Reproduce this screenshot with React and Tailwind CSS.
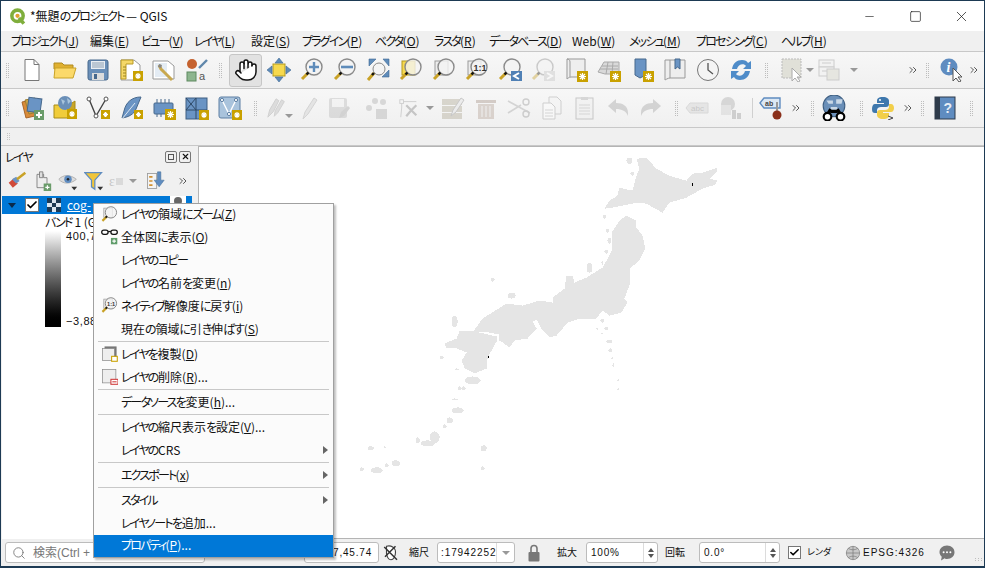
import { Hand, Search, Minus, Square, X, ChevronsRight, Check } from "lucide-react";

// the reference font squeezes kana a lot more than kanji, so tighten those runs only
const Jp = ({ children }) =>
  String(children)
    .split(/([ァ-ヶー]+|[ぁ-ん]+)/)
    .map((part, i) => {
      if (/^[ァ-ヶー]+$/.test(part)) return <span key={i} className="tracking-[-1.8px]">{part}</span>;
      if (/^[ぁ-ん]+$/.test(part)) return <span key={i} className="tracking-[-1.2px]">{part}</span>;
      return part;
    });

// small yellow badge with a white asterisk used on "new ..." icons
const Badge = ({ x = 13, y = 13, s = 11 }) => (
  <g>
    <rect x={x} y={y} width={s} height={s} fill="#c9a100" />
    <path
      d={`M${x + s / 2} ${y + 2}v${s - 4}M${x + 2} ${y + s / 2}h${s - 4}M${x + 3} ${y + 3}l${s - 6} ${s - 6}M${x + s - 3} ${y + 3}l${6 - s} ${s - 6}`}
      stroke="#fff"
      strokeWidth="1.2"
    />
  </g>
);

const Svg = ({ children, size = 24, className = "" }) => (
  <svg width={size} height={size} viewBox="0 0 24 24" fill="none" className={className}>
    {children}
  </svg>
);

// magnifier glass with a yellow handle
const Glass = ({ children, fill = "#f4f4f4" }) => (
  <>
    {children}
    <circle cx="14" cy="9" r="8" fill={fill} fillOpacity="0.8" stroke="#8a8a8a" strokeWidth="1.4" />
    <path d="M8 15L2 21" stroke="#c9a227" strokeWidth="3" />
    <path d="M8.5 14.5L6.5 16.5" stroke="#111" strokeWidth="2.4" />
  </>
);

const icons = {
  newFile: (
    <Svg>
      <path d="M5 1.500h9l5 5v16H5z" fill="#fff" stroke="#777" />
      <path d="M14 1.500v5h5" stroke="#777" />
    </Svg>
  ),
  open: (
    <Svg>
      <path d="M1 5h8l2 2h9v4H1z" fill="#e0b030" stroke="#b08a20" />
      <path d="M2 10h21l-3 10H1z" fill="#fbd96a" stroke="#c9a227" />
    </Svg>
  ),
  save: (
    <Svg>
      <rect x="2" y="2" width="20" height="20" rx="2" fill="#6a8fb8" stroke="#47688c" />
      <rect x="5" y="3" width="14" height="8" fill="#e9eef3" />
      <path d="M6 5h12M6 7h12M6 9h12" stroke="#8b9fb3" />
      <rect x="6" y="15" width="12" height="7" fill="#dcdcdc" />
      <rect x="8" y="16" width="3" height="5" fill="#47688c" />
    </Svg>
  ),
  layout: (
    <Svg>
      <path d="M2 2h13l6 5v15H2z" fill="#fff" stroke="#999" />
      <path d="M2 2h12v4H7v15H2z" fill="#f5d868" stroke="#b99a25" />
      <path d="M4 9h3M4 12h3M4 15h3M4 18h3" stroke="#9c8420" />
      <Badge x={14} y={13} s={10} />
    </Svg>
  ),
  manager: (
    <Svg>
      <path d="M1 3h15l6 5v13H1z" fill="#fff" stroke="#999" />
      <path d="M3 5h12v14H3z" fill="#e4ecf4" />
      <path d="M7 7l2 4 3 3 8 8" stroke="#c8a850" strokeWidth="3" />
      <path d="M7 6l3 1-1 3-3-1z" fill="#888" />
    </Svg>
  ),
  style: (
    <Svg>
      <circle cx="7" cy="6" r="5" fill="#c5622f" />
      <path d="M14 10L22 2" stroke="#5f87ab" strokeWidth="2.4" />
      <rect x="2" y="14" width="9" height="9" fill="#8db58e" stroke="#5f8a60" />
      <text x="14" y="22" fontSize="11" fontFamily="Liberation Sans" fill="#555">a</text>
    </Svg>
  ),
  pan: (
    <Svg>
      <rect x="6" y="6" width="12" height="12" fill="#f6d94e" stroke="#b29a1e" />
      <path d="M12 0l4 5H8zM12 24l-4-5h8zM0 12l5-4v8zM24 12l-5 4V8z" fill="#5f8cba" stroke="#3f6a95" strokeWidth=".6" />
    </Svg>
  ),
  zoomIn: (
    <Svg>
      <Glass />
      <path d="M14 4v10M9 9h10" stroke="#5f8cba" strokeWidth="2.4" />
    </Svg>
  ),
  zoomOut: (
    <Svg>
      <Glass />
      <path d="M8 9h12" stroke="#5f8cba" strokeWidth="2.6" />
    </Svg>
  ),
  zoomFull: (
    <Svg>
      <path d="M3 1h7L3 8zM23 1v7l-6-7zM23 19h-7l7-7z" fill="#5f8cba" stroke="#3f6a95" strokeWidth=".6" />
      <circle cx="13" cy="11" r="6" fill="#f4f4f4" stroke="#8a8a8a" />
      <path d="M8 15L2 22" stroke="#c9a227" strokeWidth="3" />
      <path d="M8 15L6 17" stroke="#111" strokeWidth="2.4" />
    </Svg>
  ),
  zoomSel: (
    <Svg>
      <Glass>
        <rect x="3" y="3" width="13" height="14" fill="#f6d94e" stroke="#b29a1e" />
      </Glass>
    </Svg>
  ),
  zoomLayer: (
    <Svg>
      <Glass>
        <rect x="3" y="3" width="13" height="14" fill="#ececec" stroke="#999" />
      </Glass>
    </Svg>
  ),
  zoomNative: (
    <Svg>
      <Glass>
        <rect x="3" y="3" width="13" height="14" fill="#ececec" stroke="#999" />
      </Glass>
      <text x="8.500" y="12.500" fontSize="9" fontWeight="700" fontFamily="Liberation Sans" fill="#333">1:1</text>
    </Svg>
  ),
  zoomLast: (
    <Svg>
      <Glass />
      <rect x="13" y="13" width="11" height="10" fill="#4f80b5" />
      <path d="M21 15l-5 3 5 3" stroke="#fff" strokeWidth="2" />
    </Svg>
  ),
  zoomNext: (
    <Svg className="opacity-40">
      <Glass />
      <rect x="13" y="13" width="11" height="10" fill="#c4c4c4" />
      <path d="M16 15l5 3-5 3" stroke="#fff" strokeWidth="2" />
    </Svg>
  ),
  mapView: (
    <Svg>
      <path d="M3 1h18v18H7c-2 0-4 2-4 2z" fill="#eee" stroke="#999" />
      <path d="M3 1c0 0 3 0 3 3v15" stroke="#999" />
      <Badge x={13} y={13} s={11} />
    </Svg>
  ),
  map3d: (
    <Svg>
      <path d="M1 14L7 4h15v12H8z" fill="#d9d9d9" stroke="#aaa" />
      <path d="M5 8h16M3 11h18M11 4l-2 12M16 4l-1 12" stroke="#aaa" />
      <Badge x={13} y={13} s={11} />
    </Svg>
  ),
  bookmark: (
    <Svg>
      <path d="M5 1h11v16l-6 3-5-3z" fill="#6a94c4" stroke="#47688c" />
      <Badge x={13} y={13} s={11} />
    </Svg>
  ),
  bookmarks: (
    <Svg>
      <path d="M2 2h20v18H7c-2 0-5 2-5 2z" fill="#eee" stroke="#999" />
      <path d="M7 2v18" stroke="#999" />
      <path d="M12 1h5v10l-2.500-2-2.500 2z" fill="#6a94c4" stroke="#47688c" />
    </Svg>
  ),
  clock: (
    <Svg>
      <circle cx="12" cy="12" r="10.500" fill="#f4f4f4" stroke="#777" />
      <path d="M12 5v7l5 4" stroke="#555" strokeWidth="1.3" />
    </Svg>
  ),
  refresh: (
    <Svg>
      <path d="M3 11C4 5 8 2 13 2c3 0 5 1 6 3l3-2v8h-8l3-3c-2-3-8-2-9 3z" fill="#4f8cc9" />
      <path d="M21 13c-1 6-5 9-10 9-3 0-5-1-6-3l-3 2v-8h8l-3 3c2 3 8 2 9-3z" fill="#4f8cc9" />
    </Svg>
  ),
  select: (
    <Svg>
      <rect x="1" y="1" width="19" height="19" fill="#e0e0d8" stroke="#bbb" strokeDasharray="2 1" />
      <path d="M11 10v13l3-3 3 4 2-1-3-4h4z" fill="#fff" stroke="#aaa" />
    </Svg>
  ),
  boxes: (
    <Svg>
      <rect x="1" y="2" width="15" height="7" fill="#f2f2f2" stroke="#c4c4c4" />
      <rect x="1" y="9" width="15" height="9" fill="#f2f2f2" stroke="#c4c4c4" />
      <path d="M4 5h9M4 13h9" stroke="#c4c4c4" />
      <rect x="9" y="11" width="12" height="11" fill="#e4e4dc" stroke="#c4c4c4" />
    </Svg>
  ),
  identify: (
    <Svg>
      <circle cx="9" cy="9" r="8.500" fill="#5f8cc0" />
      <text x="6.500" y="14" fontSize="14" fontStyle="italic" fontWeight="700" fontFamily="Liberation Serif" fill="#fff">i</text>
      <path d="M13 10v13l3-3 3 4 2-1-3-4h4z" fill="#fff" stroke="#555" />
    </Svg>
  ),
  layers: (
    <Svg>
      <path d="M2 6l10-2 3 16-9 2z" fill="#d98b3a" stroke="#a8662a" />
      <path d="M5 4l10-2 3 14-9 2z" fill="#c9a24a" stroke="#a08030" />
      <rect x="8" y="2" width="13" height="14" fill="#6a94c4" stroke="#47688c" transform="rotate(8 14 9)" />
      <rect x="14" y="14" width="10" height="10" fill="#6a9c6a" />
      <path d="M19 16v6M16 19h6" stroke="#fff" strokeWidth="2" />
    </Svg>
  ),
  gpkg: (
    <Svg>
      <path d="M1 9h15v13H1z" fill="#f0cc3a" stroke="#a88c18" />
      <path d="M16 9l6-4v13l-6 4z" fill="#c9a627" stroke="#a88c18" />
      <circle cx="12" cy="7" r="7" fill="#6a8fb8" />
      <path d="M8 3l4 2-2 4zM14 2l4 3-3 3z" fill="#a8c4dc" />
      <Badge x={14} y={13} s={10} />
    </Svg>
  ),
  vertex: (
    <Svg>
      <path d="M3 3l7 17L20 3" stroke="#444" strokeWidth="1.4" />
      <circle cx="3" cy="3" r="2" fill="#fff" stroke="#555" />
      <circle cx="10" cy="20" r="2" fill="#fff" stroke="#555" />
      <circle cx="20" cy="3" r="2" fill="#fff" stroke="#555" />
      <Badge x={15} y={14} s={9} />
    </Svg>
  ),
  feather: (
    <Svg>
      <path d="M22 1c-9 0-15 5-17 14l-2 7c7-1 12-4 14-9z" fill="#6a94c4" stroke="#47688c" />
      <path d="M3 23L16 7" stroke="#dce6f0" />
      <Badge x={15} y={14} s={9} />
    </Svg>
  ),
  chip: (
    <Svg>
      <rect x="2" y="7" width="19" height="11" rx="1" fill="#6a94c4" stroke="#47688c" />
      <path d="M5 3v4M9 3v4M13 3v4M17 3v4M5 18v3M9 18v3" stroke="#47688c" />
      <Badge x={13} y={13} s={11} />
    </Svg>
  ),
  grid: (
    <Svg>
      <rect x="1" y="2" width="21" height="21" fill="#6a94c4" stroke="#3e5f82" />
      <path d="M1 14h21M11 14v9M11 2v12M1 2l10 12M11 2L1 14" stroke="#2f4a68" />
      <Badge x={14} y={14} s={10} />
    </Svg>
  ),
  mesh: (
    <Svg>
      <rect x="1" y="1" width="21" height="21" rx="2" fill="#a9c3dc" stroke="#5d7fa3" />
      <path d="M4 4l7 14L18 4" stroke="#fff" strokeWidth="1.4" />
      <circle cx="4" cy="4" r="1.6" fill="#fff" stroke="#5d7fa3" />
      <circle cx="11" cy="18" r="1.6" fill="#fff" stroke="#5d7fa3" />
      <circle cx="18" cy="4" r="1.6" fill="#fff" stroke="#5d7fa3" />
      <Badge x={14} y={14} s={10} />
    </Svg>
  ),
  pencils: (
    <Svg>
      <path d="M2 22l2-8L11 2l3 2-6 12zM9 21l1-6 7-12 3 2-7 12z" fill="#dcdcdc" stroke="#cfcfcf" />
    </Svg>
  ),
  pencil: (
    <Svg>
      <path d="M5 23l2-7 9-14 3 2-9 14z" fill="#e4e4e4" stroke="#d4d4d4" />
    </Svg>
  ),
  saveEdit: (
    <Svg className="opacity-35">
      <rect x="2" y="2" width="18" height="20" rx="2" fill="#b0b0b0" />
      <rect x="5" y="3" width="12" height="8" fill="#f0f0f0" />
      <path d="M12 22l2-6 7-6 2 2-6 8z" fill="#999" />
    </Svg>
  ),
  dots: (
    <Svg className="opacity-50">
      <circle cx="4" cy="12" r="3" fill="#bbb" />
      <circle cx="10" cy="5" r="3" fill="#bbb" />
      <circle cx="18" cy="6" r="3" fill="#bbb" />
      <rect x="11" y="13" width="11" height="10" fill="#bbb" />
    </Svg>
  ),
  vertexTool: (
    <Svg className="opacity-50">
      <rect x="2" y="3" width="4" height="4" stroke="#aaa" />
      <path d="M6 5h14M4 7v5l-1 10" stroke="#aaa" />
      <path d="M9 9l11 11M20 9l-6 6-5 6" stroke="#999" strokeWidth="2.4" />
    </Svg>
  ),
  table: (
    <Svg className="opacity-35">
      <rect x="1" y="3" width="20" height="6" fill="#a49c84" />
      <rect x="1" y="10" width="20" height="6" fill="#a49c84" />
      <rect x="1" y="17" width="20" height="6" fill="#a49c84" />
      <path d="M10 20l2-6L20 2l3 2-8 12z" fill="#ddd" stroke="#777" />
    </Svg>
  ),
  trash: (
    <Svg className="opacity-30">
      <path d="M2 4h20v3H2z" fill="#8a7060" />
      <path d="M4 8h16v15H4z" fill="#a08878" />
      <path d="M8 10v11M12 10v11M16 10v11" stroke="#eee" />
    </Svg>
  ),
  scissors: (
    <Svg className="opacity-35">
      <path d="M1 5l22 12M1 17l13-8" stroke="#999" strokeWidth="1.6" />
      <circle cx="19" cy="6" r="3" stroke="#888" strokeWidth="1.4" />
      <circle cx="19" cy="18" r="3" stroke="#888" strokeWidth="1.4" />
    </Svg>
  ),
  copy: (
    <Svg className="opacity-40">
      <path d="M9 1h8l4 4v13H9z" fill="#f4f4f4" stroke="#999" />
      <path d="M3 7h8l4 4v12H3z" fill="#fff" stroke="#999" />
      <path d="M5 14h8M5 17h8M5 20h8" stroke="#aaa" />
    </Svg>
  ),
  paste: (
    <Svg className="opacity-40">
      <rect x="3" y="2" width="17" height="21" fill="#eee" stroke="#888" />
      <rect x="8" y="1" width="7" height="3" fill="#aaa" />
      <path d="M6 9h11M6 12h11M6 15h11M6 18h11" stroke="#aaa" />
    </Svg>
  ),
  undo: (
    <Svg className="opacity-30">
      <path d="M2 10l8-7v4c7 0 12 3 12 10v3c-2-5-6-7-12-7v4z" fill="#888" />
    </Svg>
  ),
  redo: (
    <Svg className="opacity-30">
      <path d="M22 10l-8-7v4C7 7 2 10 2 17v3c2-5 6-7 12-7v4z" fill="#888" />
    </Svg>
  ),
  abc: (
    <Svg className="opacity-35">
      <path d="M1 12l4-5h18v10H5z" fill="#ccc" stroke="#aaa" />
      <text x="6" y="15" fontSize="8" fontFamily="Liberation Sans" fill="#777">abc</text>
    </Svg>
  ),
  labelTool: (
    <Svg className="opacity-40">
      <circle cx="10" cy="8" r="7" fill="#aaa" />
      <rect x="3" y="9" width="10" height="10" fill="#ccc" />
      <rect x="14" y="14" width="4" height="9" fill="#999" />
      <rect x="19" y="17" width="4" height="6" fill="#999" />
    </Svg>
  ),
  labelPin: (
    <Svg>
      <path d="M1 7l4-5h16v10H5z" fill="#dce8f4" stroke="#5f8cc0" strokeWidth="1.4" />
      <text x="6" y="10" fontSize="7" fontWeight="700" fontFamily="Liberation Sans" fill="#444">ab</text>
      <path d="M18 6v12" stroke="#999" strokeWidth="2" />
      <circle cx="18" cy="19" r="4.500" fill="#8a2f1a" />
    </Svg>
  ),
  binoculars: (
    <Svg size={26}>
      <circle cx="12" cy="10" r="10" fill="#6a8fb8" stroke="#3e5f82" />
      <path d="M5 5h6v3H7zM14 4h6l-1 4h-5zM9 11h6v3H9z" fill="#c9d8e6" />
      <path d="M9 13l-3 5M15 13l3 5M9 15h6" stroke="#000" strokeWidth="3" />
      <circle cx="6" cy="20" r="3.500" fill="#fff" stroke="#000" strokeWidth="2" />
      <circle cx="18" cy="20" r="3.500" fill="#fff" stroke="#000" strokeWidth="2" />
    </Svg>
  ),
  python: (
    <Svg>
      <path d="M12 1c-5 0-6 2-6 4v2h7v1H4c-2 0-3 2-3 5s1 4 3 4h2v-3c0-2 2-3 4-3h5c2 0 3-1 3-3V5c0-2-2-4-6-4z" fill="#3f78ad" />
      <path d="M12 23c5 0 6-2 6-4v-2h-6v-1h8c2 0 3-2 3-4s-1-4-3-4h-2v3c0 2-2 3-4 3H9c-2 0-3 1-3 3v2c0 2 2 4 6 4z" fill="#f2cf4a" />
      <circle cx="9" cy="4" r="1" fill="#fff" />
      <path d="M17 20l5 2-5 2" stroke="#444" />
    </Svg>
  ),
  help: (
    <Svg>
      <rect x="2" y="1" width="20" height="22" fill="#5f8cc0" stroke="#2e3b4a" />
      <rect x="2" y="1" width="5" height="22" fill="#2e3b4a" />
      <text x="10.500" y="17" fontSize="14" fontWeight="700" fontFamily="Liberation Sans" fill="#e8eef5">?</text>
    </Svg>
  ),
};

const Grip = ({ className = "" }) => (
  <div className={`grid grid-cols-2 gap-x-[1px] gap-y-[1px] w-[3px] shrink-0 ${className}`}>
    {[...Array(16)].map((_, i) => (
      <span key={i} className="block w-[1px] h-[1px] bg-[#bdbdbd]" />
    ))}
  </div>
);

const Dropdown = ({ className = "" }) => (
  <span className={`w-0 h-0 shrink-0 border-l-[4px] border-r-[4px] border-t-[4px] border-l-transparent border-r-transparent border-t-[#999] ${className}`} />
);

const More = ({ className = "" }) => (
  <div className={`flex items-center justify-center shrink-0 text-[#444] ${className}`}>
    <ChevronsRight size={12} strokeWidth={1.8} />
  </div>
);

const Btn = ({ icon, className = "w-[33px]" }) => (
  <div className={`flex items-center justify-center shrink-0 ${className}`}>{icons[icon]}</div>
);

const menuBar = [
  ["プロジェクト", "J", "w-[79px]"],
  ["編集", "E", "w-[51px]"],
  ["ビュー", "V", "w-[53px]"],
  ["レイヤ", "L", "w-[57px]"],
  ["設定", "S", "w-[51px]"],
  ["プラグイン", "P", "w-[73px]"],
  ["ベクタ", "O", "w-[59px]"],
  ["ラスタ", "R", "w-[55px]"],
  ["データベース", "D", "w-[83px]"],
  ["Web", "W", "w-[57px]"],
  ["メッシュ", "M", "w-[67px]"],
  ["プロセシング", "C", "w-[85px]"],
  ["ヘルプ", "H", "w-[60px]"],
];

const Mn = ({ label, k, tail = "" }) => (
  <span className="whitespace-nowrap">
    <Jp>{label}</Jp>(<u>{k}</u>){tail}
  </span>
);

const MenuIcon = ({ name }) => {
  if (name === "zoom")
    return (
      <Svg size={17}>
        <Glass>
          <rect x="4" y="3" width="12" height="13" fill="#eee" stroke="#999" />
        </Glass>
      </Svg>
    );
  if (name === "overview")
    return (
      <Svg size={17}>
        <rect x="1" y="3" width="9" height="6" rx="3" stroke="#111" strokeWidth="1.800" />
        <rect x="14" y="3" width="9" height="6" rx="3" stroke="#111" strokeWidth="1.800" />
        <path d="M10 5h4" stroke="#111" strokeWidth="1.800" />
        <rect x="14" y="14" width="9" height="9" fill="#5f9c6a" />
        <path d="M18.500 16v5M16 18.500h5" stroke="#fff" strokeWidth="1.500" />
      </Svg>
    );
  if (name === "native")
    return (
      <Svg size={17}>
        <Glass>
          <rect x="4" y="3" width="12" height="13" fill="#eee" stroke="#999" />
        </Glass>
        <text x="8.500" y="12" fontSize="8" fontWeight="700" fontFamily="Liberation Sans" fill="#333">1:1</text>
      </Svg>
    );
  if (name === "dup")
    return (
      <Svg size={17}>
        <rect x="5" y="2" width="17" height="17" fill="#777" />
        <rect x="2" y="5" width="17" height="17" fill="#eee" stroke="#888" />
        <rect x="15" y="16" width="8" height="7" fill="#fff" stroke="#c9a100" strokeWidth="1.500" />
      </Svg>
    );
  if (name === "remove")
    return (
      <Svg size={17}>
        <rect x="2" y="2" width="19" height="19" fill="#eee" stroke="#888" />
        <rect x="14" y="16" width="10" height="7" fill="#fff" stroke="#d03a3a" strokeWidth="1.500" />
        <path d="M16 19.500h6" stroke="#d03a3a" strokeWidth="1.500" />
      </Svg>
    );
  return null;
};

const ctxMenu = [
  { t: <Mn label="レイヤの領域にズーム" k="Z" />, icon: "zoom", h: "h-[22px]" },
  { t: <Mn label="全体図に表示" k="O" />, icon: "overview" },
  { t: <Jp>レイヤのコピー</Jp> },
  { t: <Mn label="レイヤの名前を変更" k="n" /> },
  { t: <Mn label="ネイティブ解像度に戻す" k="i" />, icon: "native" },
  { t: <Mn label="現在の領域に引き伸ばす" k="S" /> },
  { sep: true },
  { t: <Mn label="レイヤを複製" k="D" />, icon: "dup" },
  { t: <Mn label="レイヤの削除" k="R" tail="..." />, icon: "remove" },
  { sep: true },
  { t: <Mn label="データソースを変更" k="h" tail="..." /> },
  { sep: true },
  { t: <Mn label="レイヤの縮尺表示を設定" k="V" tail="..." /> },
  { t: <Jp>レイヤのCRS</Jp>, arrow: true },
  { sep: true },
  { t: <Mn label="エクスポート" k="x" />, arrow: true },
  { sep: true },
  { t: <Jp>スタイル</Jp>, arrow: true },
  { t: <Jp>レイヤノートを追加...</Jp> },
  { t: <Mn label="プロパティ" k="P" tail="..." />, active: true, h: "h-[22px]" },
];

const ContextMenu = () => (
  <div className="absolute left-[92px] top-[202px] w-[241px] bg-[#fbfbfb] border border-[#a0a0a0] shadow-[2px_2px_2px_rgba(0,0,0,0.25)] text-[12px] text-[#111]">
    {ctxMenu.map((item, i) =>
      item.sep ? (
        <div key={i} className="h-[2px] mx-[4px] border-t border-[#c8c8c8]" />
      ) : (
        <div
          key={i}
          className={`relative flex items-center pl-[27px] pb-[2px] ${item.h || "h-[23px]"} ${
            item.active ? "bg-[#0078d7] text-white" : ""
          }`}
        >
          {item.icon && (
            <span className="absolute left-[7px] top-[2px]">
              <MenuIcon name={item.icon} />
            </span>
          )}
          {item.t}
          {item.arrow && (
            <span className="absolute right-[5px] top-[7px] w-0 h-0 border-t-[4px] border-b-[4px] border-l-[5px] border-t-transparent border-b-transparent border-l-[#666]" />
          )}
        </div>
      )
    )}
  </div>
);

const islands = [
  [630, 160, 3, 3], [633, 173, 2, 2], [590, 267, 3, 5], [512, 295, 4, 3], [493, 279, 2, 2],
  [455, 321, 3, 6], [605, 216, 2, 2], [608, 230, 2, 2], [610, 240, 2, 3], [607, 251, 2, 2],
  [603, 262, 1, 2], [598, 328, 1, 1], [603, 320, 2, 2], [607, 328, 2, 2], [603, 333, 1, 1],
  [610, 341, 3, 2], [442, 357, 2, 2], [457, 369, 2, 1], [473, 380, 8, 4], [460, 388, 2, 2],
  [464, 388, 2, 2], [455, 399, 3, 1], [458, 410, 6, 3], [450, 420, 3, 3], [445, 426, 2, 2],
  [435, 437, 5, 6], [428, 443, 7, 3], [418, 440, 2, 3], [371, 448, 3, 2], [385, 447, 1, 1],
  [396, 463, 4, 3], [387, 465, 2, 2], [377, 470, 6, 3], [362, 469, 2, 2], [484, 448, 3, 3],
  [483, 468, 2, 2], [611, 350, 2, 2], [613, 358, 1, 1], [614, 365, 1, 2], [619, 380, 1, 1], [619, 389, 1, 1],
];

const JapanMap = () => (
  <svg viewBox="199 147 786 390" className="w-full h-full" shapeRendering="crispEdges">
    <g fill="#e5e5e5">
      {/* Hokkaido */}
      <polygon points="637,158 647,157 657,168 670,175 687,180 693,173 703,172 718,167 718,170 710,178 718,180 716,184 703,188 687,197 670,202 663,212 647,203 637,202 623,205 613,207 605,208 610,200 618,195 620,187 633,190 637,175 640,168" />
      {/* Honshu and Shikoku, they read as one blob at this scale */}
      <polygon points="620,220 627,215 637,220 637,227 643,235 646,248 640,260 630,268 631,282 625,298 628,302 622,312 610,315 603,310 597,318 580,318 568,322 563,328 557,335 550,337 541,327 537,319 533,321 537,328 528,338 515,340 510,347 503,342 499,340 499,334 484,331 470,331 473,332 483,318 507,303 523,305 540,300 553,302 553,297 565,288 567,275 573,275 575,282 587,277 603,267 607,260 613,248 612,232" />
      {/* Kyushu */}
      <polygon points="460,330 475,331 484,333 497,336 497,341 488,357 487,368 475,373 465,368 462,360 467,352 457,348 447,348 445,343 457,338" />
      {islands.map(([x, y, rx, ry], i) => (
        <ellipse key={i} cx={x} cy={y} rx={rx} ry={ry} />
      ))}
    </g>
    <rect x="693" y="182" width="1" height="3" fill="#000" />
    <rect x="488" y="356" width="1" height="2" fill="#000" />
  </svg>
);

const Spin = ({ text, className = "" }) => (
  <div className={`flex h-[21px] bg-white border border-[#bcbcbc] rounded-[3px] shrink-0 ${className}`}>
    <span className="flex-1 pl-[4px] leading-[19px] tracking-[0.8px]">{text}</span>
    <span className="w-[14px] flex flex-col items-center justify-center gap-[2px] border-l border-[#dcdcdc]">
      <span className="w-0 h-0 border-l-[3px] border-r-[3px] border-b-[4px] border-l-transparent border-r-transparent border-b-[#555]" />
      <span className="w-0 h-0 border-l-[3px] border-r-[3px] border-t-[4px] border-l-transparent border-r-transparent border-t-[#555]" />
    </span>
  </div>
);

export default function App() {
  return (
    <div className="relative w-[985px] h-[568px] overflow-hidden flex flex-col bg-[#f0f0f0] border-x border-t-[1px] border-b-[2px] border-[#1d3a54] [font-family:'Noto_Sans_CJK_JP','Liberation_Sans',sans-serif] [font-feature-settings:'palt'] text-[12px] text-[#111]">
      {/* title bar */}
      <div className="flex items-center h-[30px] bg-white shrink-0">
        <svg width="17" height="17" viewBox="0 0 24 24" className="ml-[8px]" fill="none">
          <circle cx="12" cy="11" r="8" stroke="#7fae3c" strokeWidth="5" />
          <circle cx="12" cy="11" r="3" fill="#e0a030" />
          <path d="M14 14l7 8" stroke="#7fae3c" strokeWidth="5" />
        </svg>
        <span className="ml-[4px] whitespace-nowrap">
          <Jp>*無題のプロジェクト — QGIS</Jp>
        </span>
        <div className="ml-auto flex items-center">
          <div className="w-[46px] flex justify-center"><Minus size={13} strokeWidth={1.1} /></div>
          <div className="w-[46px] flex justify-center"><Square size={13} strokeWidth={1.2} /></div>
          <div className="w-[46px] flex justify-center"><X size={17} strokeWidth={1} /></div>
        </div>
      </div>

      {/* menu bar */}
      <div className="flex items-center h-[20px] pl-[10px] bg-[#f0f0f0] shrink-0">
        {menuBar.map(([label, k, w]) => (
          <div key={label} className={`shrink-0 ${w}`}>
            <Mn label={label} k={k} />
          </div>
        ))}
      </div>

      {/* toolbar 1 */}
      <div className="flex items-center h-[38px] pl-[5px] shrink-0 bg-gradient-to-b from-[#f7f7f7] to-[#f0f0f0] border-t border-b border-[#c8c8c8]">
        <Grip className="mr-[6px]" />
        <Btn icon="newFile" />
        <Btn icon="open" />
        <Btn icon="save" />
        <Btn icon="layout" />
        <Btn icon="manager" />
        <Btn icon="style" />
        <Grip className="ml-[6px] mr-[7px]" />
        <div className="w-[33px] h-[33px] shrink-0 flex items-center justify-center bg-[#e2e2e2] border border-[#c6c6c6] rounded-[3px]">
          <Hand size={24} fill="#fff" stroke="#111" strokeWidth={1.5} />
        </div>
        <Btn icon="pan" />
        <Btn icon="zoomIn" />
        <Btn icon="zoomOut" />
        <Btn icon="zoomFull" />
        <Btn icon="zoomSel" />
        <Btn icon="zoomLayer" />
        <Btn icon="zoomNative" />
        <Btn icon="zoomLast" />
        <Btn icon="zoomNext" />
        <Btn icon="mapView" />
        <Btn icon="map3d" />
        <Btn icon="bookmark" />
        <Btn icon="bookmarks" />
        <Btn icon="clock" />
        <Btn icon="refresh" />
        <Grip className="ml-[8px] mr-[13px]" />
        <Btn icon="select" className="w-[24px]" />
        <Dropdown className="ml-[1px] mr-[4px]" />
        <Btn icon="boxes" className="w-[24px] opacity-80" />
        <Dropdown className="ml-[8px] mr-[47px]" />
        <More className="w-[16px]" />
        <Grip className="ml-[5px] mr-[11px]" />
        <Btn icon="identify" className="w-[24px]" />
        <More className="w-[20px]" />
      </div>

      {/* toolbar 2 */}
      <div className="flex items-center h-[39px] pl-[5px] shrink-0 bg-gradient-to-b from-[#f7f7f7] to-[#f0f0f0] border-b border-[#c8c8c8]">
        <Grip className="mr-[6px]" />
        <Btn icon="layers" />
        <Btn icon="gpkg" />
        <Btn icon="vertex" />
        <Btn icon="feather" />
        <Btn icon="chip" />
        <Btn icon="grid" />
        <Btn icon="mesh" />
        <Grip className="ml-[8px] mr-[9px]" />
        <Btn icon="pencils" className="w-[22px]" />
        <Dropdown className="-ml-[3px] mr-[5px] mt-[16px]" />
        <Btn icon="pencil" className="w-[24px]" />
        <Btn icon="saveEdit" className="w-[34px]" />
        <Btn icon="dots" className="w-[42px]" />
        <Btn icon="vertexTool" className="w-[22px]" />
        <Dropdown className="ml-[6px] mr-[2px]" />
        <Btn icon="table" />
        <Btn icon="trash" />
        <Btn icon="scissors" />
        <Btn icon="copy" />
        <Btn icon="paste" />
        <Btn icon="undo" />
        <Btn icon="redo" />
        <Grip className="ml-[8px] mr-[3px]" />
        <Btn icon="abc" className="w-[32px]" />
        <Btn icon="labelTool" className="w-[33px]" />
        <div className="w-[1px] h-[20px] ml-[6px] mr-[3px] bg-[#d0d0d0] shrink-0" />
        <Btn icon="labelPin" className="w-[30px]" />
        <More className="w-[20px]" />
        <Grip className="ml-[5px] mr-[4px]" />
        <Btn icon="binoculars" className="w-[32px]" />
        <Grip className="ml-[10px] mr-[5px]" />
        <Btn icon="python" className="w-[30px]" />
        <More className="w-[20px]" />
        <Grip className="ml-[3px] mr-[6px]" />
        <Btn icon="help" className="w-[30px]" />
        <Grip className="ml-[10px]" />
      </div>

      {/* empty toolbar */}
      <div className="flex items-center h-[18px] pl-[6px] shrink-0 border-b border-[#c8c8c8]">
        <div className="grid grid-cols-2 gap-[1px] w-[3px]">
          {[...Array(8)].map((_, i) => (
            <span key={i} className="w-[1px] h-[1px] bg-[#c4c4c4]" />
          ))}
        </div>
      </div>

      {/* main */}
      <div className="flex flex-1 min-h-0">
        <div className="w-[197px] shrink-0 flex flex-col pl-[1px] pr-[6px]">
          <div className="flex items-center h-[19px] pl-[3px] pr-[1px] mt-[1px]">
            <span><Jp>レイヤ</Jp></span>
            <div className="ml-auto flex gap-[2px]">
              <span className="w-[12px] h-[12px] border border-[#777] rounded-[2px] flex items-center justify-center">
                <span className="w-[6px] h-[6px] border border-[#555]" />
              </span>
              <span className="w-[12px] h-[12px] border border-[#777] rounded-[2px] flex items-center justify-center">
                <X size={9} strokeWidth={3} />
              </span>
            </div>
          </div>
          <div className="flex items-center h-[30px] pl-[3px]">
            <div className="w-[24px] flex justify-center shrink-0">
              <Svg size={20}>
                <path d="M2 14l6-5 5 6-6 5z" fill="#d04a3a" />
                <path d="M6 10l5-3 4 5-4 3z" fill="#6a94c4" />
                <path d="M12 10L22 2" stroke="#c9a227" strokeWidth="3" />
              </Svg>
            </div>
            <div className="w-[26px] flex justify-center shrink-0">
              <Svg size={20}>
                <path d="M6 4h8v4h4v12H6z" fill="#eee" stroke="#777" />
                <path d="M9 1h4v7H9z" fill="#ddd" stroke="#777" />
                <rect x="14" y="15" width="9" height="9" fill="#6a9c6a" />
                <path d="M18.500 17v5M16 19.500h5" stroke="#fff" strokeWidth="1.500" />
              </Svg>
            </div>
            <div className="w-[26px] flex justify-center shrink-0">
              <Svg size={20}>
                <path d="M1 10c5-6 14-6 21 0-7 6-16 6-21 0z" fill="#dcdcdc" stroke="#aaa" />
                <circle cx="12" cy="10" r="4.500" fill="#5f8cc0" />
                <circle cx="12" cy="10" r="1.500" fill="#222" />
                <path d="M16 19h7l-3.500 4z" fill="#333" />
              </Svg>
            </div>
            <div className="w-[25px] flex justify-center shrink-0">
              <Svg size={20}>
                <path d="M1 2h20l-8 9v11l-4-3v-8z" fill="#f0c53a" stroke="#5f8cc0" strokeWidth="1.500" />
                <path d="M16 19h7l-3.500 4z" fill="#333" />
              </Svg>
            </div>
            <div className="w-[20px] flex items-center justify-center gap-[1px] opacity-40 shrink-0">
              <span className="text-[14px] text-[#888] [font-family:'Liberation_Serif',serif]">ε</span>
              <span className="w-[7px] h-[7px] bg-[#bbb]" />
            </div>
            <Dropdown className="ml-[3px] mr-[8px]" />
            <div className="w-[20px] flex justify-center shrink-0">
              <Svg size={20}>
                <rect x="3" y="3" width="11" height="18" fill="#f4f4f4" stroke="#999" />
                <path d="M5 7h4M5 12h4M5 17h4" stroke="#d09030" strokeWidth="2" />
                <path d="M15 1h4v10h4l-6 8-6-8h4z" fill="#5f8cc0" stroke="#3f6a95" strokeWidth=".6" />
              </Svg>
            </div>
            <More className="w-[16px] ml-[10px]" />
          </div>

          {/* layer tree */}
          <div className="flex-1 bg-white min-h-0 overflow-hidden">
            <div className="flex items-center h-[18px] bg-[#0078d7] text-white">
              <span className="ml-[6px] w-0 h-0 border-l-[4px] border-r-[4px] border-t-[5px] border-l-transparent border-r-transparent border-t-[#0a2a4a]" />
              <span className="ml-[9px] w-[14px] h-[14px] bg-white border border-[#777] flex items-center justify-center">
                <Check size={12} strokeWidth={3.5} color="#000" />
              </span>
              <span className="ml-[8px] w-[14px] h-[14px] grid grid-cols-3 grid-rows-3">
                {[0, 1, 0, 1, 0, 1, 0, 1, 0].map((c, i) => (
                  <span key={i} className={c ? "bg-[#dce6f0]" : "bg-[#1d3a54]"} />
                ))}
              </span>
              <span className="ml-[6px] underline">cog-</span>
              <span className="ml-auto mr-[6px] mb-[2px] w-[16px] h-[16px] bg-white flex justify-center pt-[1px]">
                <span className="w-[8px] h-[8px] rounded-full bg-[#666]" />
              </span>
            </div>
            <div className="pl-[43px] h-[14px] leading-[14px] mt-[1px] whitespace-nowrap"><Jp>バンド</Jp> 1 (G</div>
            <div className="flex pl-[43px] mt-[2px]">
              <div className="w-[16px] h-[96px] bg-gradient-to-b from-white to-black" />
              <div className="ml-[5px] flex flex-col justify-between h-[96px] text-[11px] tracking-[0.6px] [font-family:'Liberation_Sans',sans-serif] leading-[11px]">
                <span>400,7</span>
                <span>−3,88</span>
              </div>
            </div>
          </div>
        </div>

        {/* map canvas */}
        <div className="flex-1 min-w-0 bg-white border-l border-t border-b border-[#b4b4b4]">
          <JapanMap />
        </div>
      </div>

      {/* status bar */}
      <div className="flex items-center h-[27px] shrink-0 pl-[4px] text-[10px] [font-family:'Liberation_Sans','Noto_Sans_CJK_JP',sans-serif]">
        <div className="flex items-center w-[200px] h-[21px] bg-white border border-[#bcbcbc] rounded-[3px] pl-[6px] shrink-0 text-[12px] text-[#777]">
          <Search size={14} strokeWidth={1.5} />
          <span className="ml-[7px] whitespace-nowrap">検索(Ctrl +</span>
        </div>
        <div className="flex items-center justify-end w-[75px] h-[21px] ml-[99px] bg-white border border-[#bcbcbc] rounded-[3px] pr-[6px] shrink-0 tracking-[0.8px]">
          07,45.74
        </div>
        <div className="w-[24px] flex justify-center shrink-0">
          <Svg size={18}>
            <path d="M6 3c6-2 12 2 12 8s-3 10-6 10-5-3-6-8z" fill="#fff" stroke="#444" strokeWidth="1.500" />
            <path d="M3 4l17 17M4 17L18 3" stroke="#333" strokeWidth="2" />
          </Svg>
        </div>
        <span className="shrink-0 w-[34px] pl-[6px]">縮尺</span>
        <div className="flex h-[21px] w-[78px] bg-white border border-[#bcbcbc] rounded-[3px] shrink-0">
          <span className="flex-1 pl-[3px] leading-[19px] tracking-[0.9px]">:17942252</span>
          <span className="w-[19px] border-l border-[#dcdcdc] flex items-center justify-center">
            <Dropdown className="border-t-[#555]" />
          </span>
        </div>
        <div className="w-[38px] flex justify-center shrink-0">
          <svg width="12" height="18" viewBox="0 0 12 18" fill="none">
            <path d="M3 8V4.500a3 3 0 0 1 6 0V8" stroke="#777" strokeWidth="1.600" />
            <rect x="0.500" y="8" width="11" height="9.500" rx="1" fill="#777" />
          </svg>
        </div>
        <span className="shrink-0 w-[33px] pl-[4px]">拡大</span>
        <Spin text="100%" className="w-[72px]" />
        <span className="shrink-0 w-[41px] pl-[7px]">回転</span>
        <Spin text="0.0°" className="w-[81px]" />
        <span className="ml-[8px] w-[13px] h-[13px] bg-white border border-[#777] flex items-center justify-center shrink-0">
          <Check size={11} strokeWidth={3.5} color="#000" />
        </span>
        <span className="ml-[6px] w-[36px] shrink-0 text-[9px] whitespace-nowrap">レンダ</span>
        <Svg size={16} className="ml-[2px] shrink-0">
          <circle cx="12" cy="12" r="10" fill="#c8c8c8" stroke="#777" />
          <path d="M2 12h20M12 2v20M5 5c4 3 10 3 14 0M5 19c4-3 10-3 14 0" stroke="#777" />
        </Svg>
        <span className="ml-[2px] w-[75px] shrink-0 tracking-[1px]">EPSG:4326</span>
        <Svg size={18} className="shrink-0">
          <path d="M12 2c6 0 10 4 10 9s-4 9-10 9c-1 0-2 0-3-1l-5 3 1-5c-2-2-3-4-3-6 0-5 4-9 10-9z" fill="#777" />
          <circle cx="7.500" cy="11" r="1.300" fill="#fff" />
          <circle cx="12" cy="11" r="1.300" fill="#fff" />
          <circle cx="16.500" cy="11" r="1.300" fill="#fff" />
        </Svg>
        <div className="ml-auto mr-[1px] mt-[14px] grid grid-cols-3 gap-[1px] w-[8px]">
          {[...Array(6)].map((_, i) => (
            <span key={i} className="w-[1px] h-[1px] bg-[#bdbdbd]" />
          ))}
        </div>
      </div>

      <ContextMenu />
    </div>
  );
}
